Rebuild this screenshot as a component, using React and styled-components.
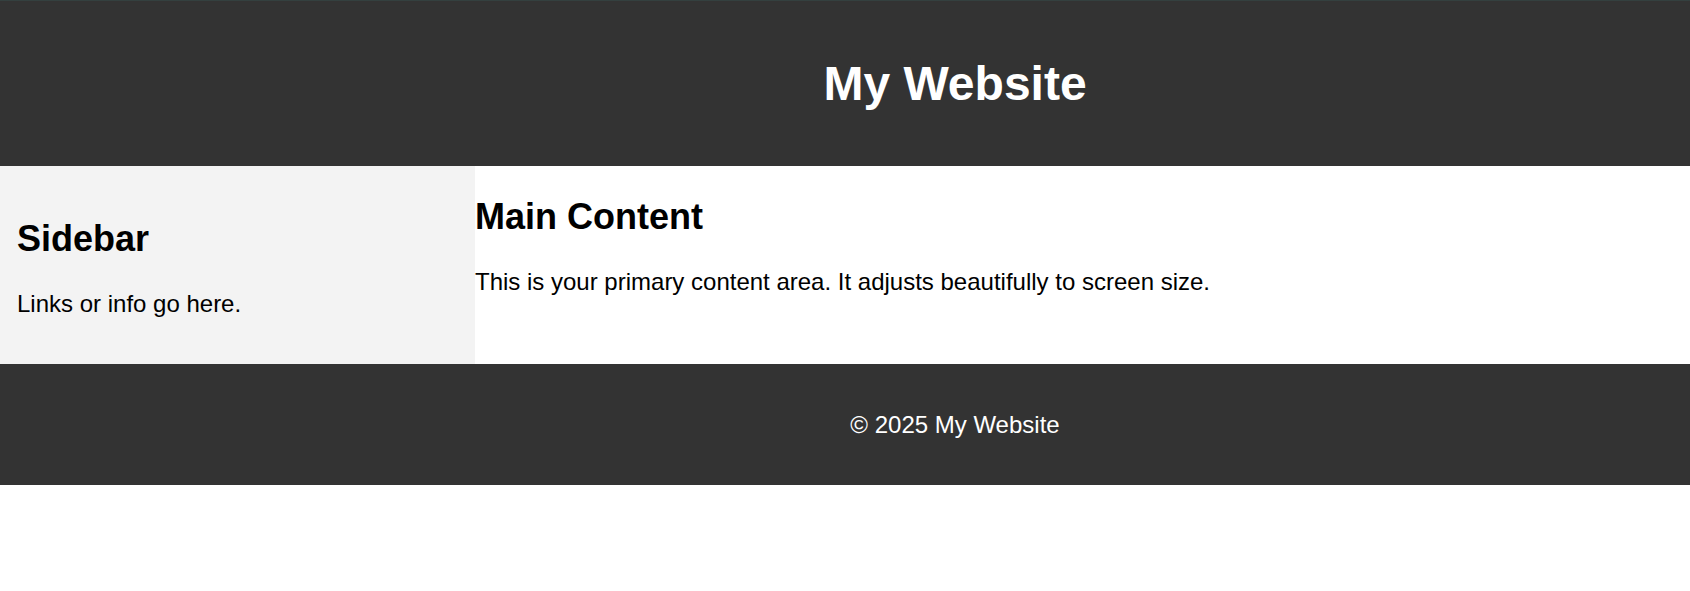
import styled, { createGlobalStyle } from "styled-components";

const GlobalStyle = createGlobalStyle`
  body {
    margin: 0;
    font-family: "Liberation Sans", Arial, sans-serif;
    background: #fff;
    color: #000;
  }
`;

export default function App() {
  return (
    <>
      <GlobalStyle />
      <Page>
        <Header>
          <Title>My Website</Title>
        </Header>
        <Body>
          <Sidebar>
            <Heading>Sidebar</Heading>
            <Text>Links or info go here.</Text>
          </Sidebar>
          <Main>
            <Heading>Main Content</Heading>
            <Text>
              This is your primary content area. It adjusts beautifully to
              screen size.
            </Text>
          </Main>
        </Body>
        <Footer>
          <Text>© 2025 My Website</Text>
        </Footer>
      </Page>
    </>
  );
}

const Page = styled.div`
  display: flex;
  flex-direction: column;
`;

const Header = styled.header`
  background-color: #333;
  color: #fff;
  text-align: center;
  padding: 23px 0 23px 220px;
  border-top: 1px solid #34403f;
`;

const Title = styled.h1`
  font-size: 48px;
  margin: 32px 0;
`;

const Body = styled.div`
  display: flex;
`;

const Sidebar = styled.aside`
  flex: 0 0 475px;
  box-sizing: border-box;
  background-color: #f3f3f3;
  padding: 22px 17px;
`;

const Main = styled.main`
  flex: 1;
`;

const Heading = styled.h2`
  font-size: 36px;
  margin: 30px 0;
`;

const Text = styled.p`
  font-size: 24px;
  margin: 24px 0;
`;

const Footer = styled.footer`
  background-color: #333;
  color: #fff;
  text-align: center;
  padding: 23px 0 22px 220px;
`;
